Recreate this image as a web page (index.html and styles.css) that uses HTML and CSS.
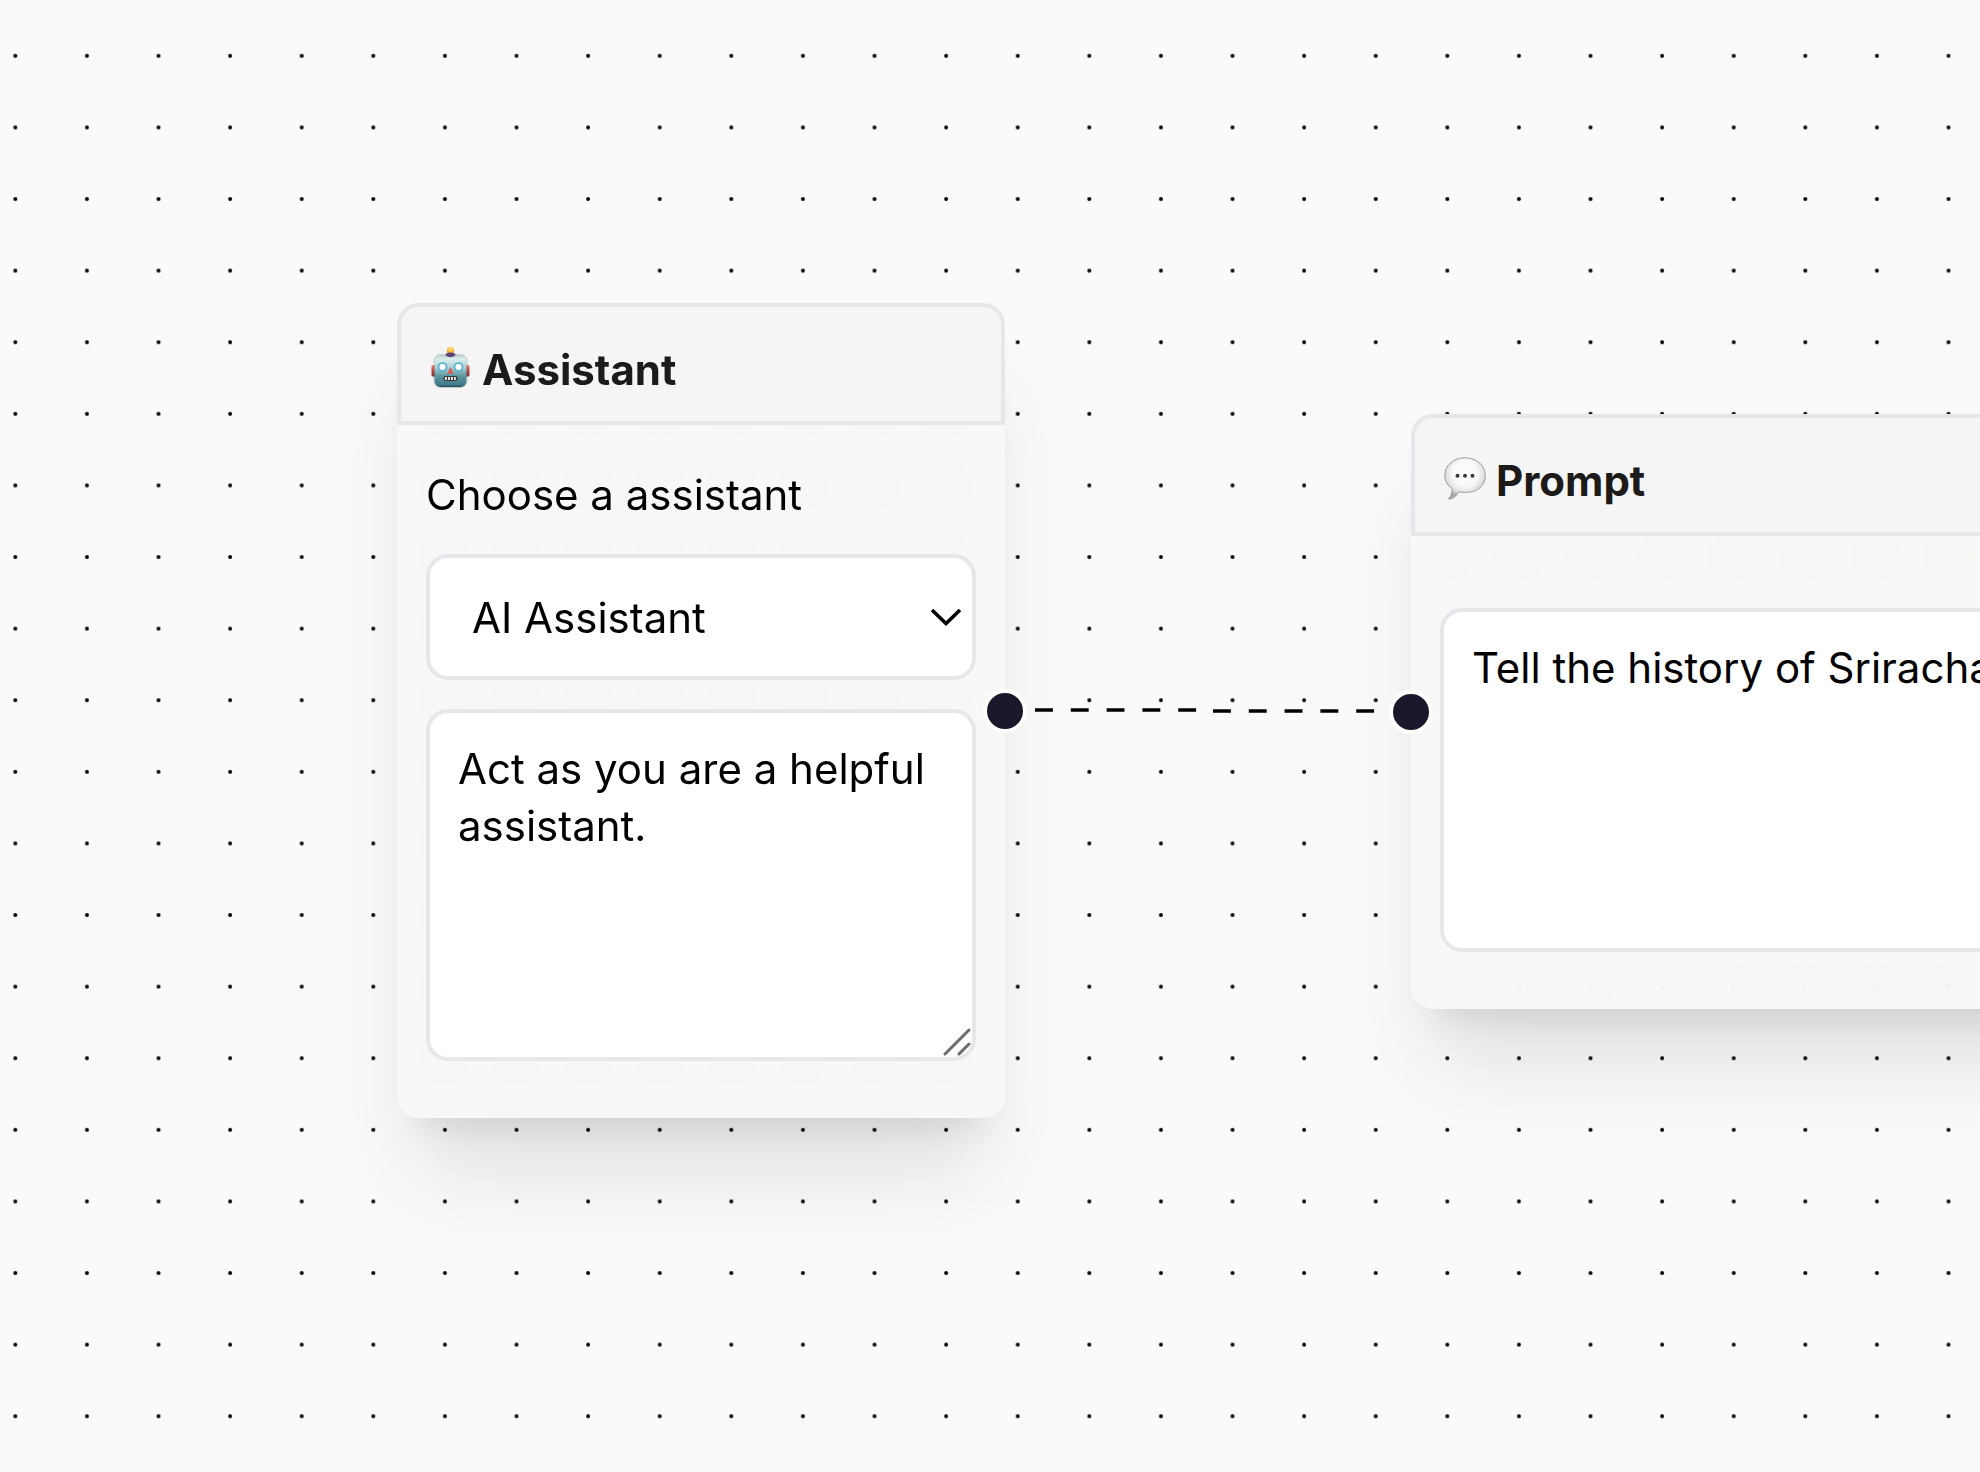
FILE: index.html
```html
<!DOCTYPE html>
<html lang="en">
<head>
  <meta charset="utf-8"/>
  <meta name="viewport" content="width=device-width, initial-scale=1.0"/>
  <title>Prompt Flow</title>
  <link rel="stylesheet" href="styles.css">
</head>
<body>
  <main class="canvas">
    <svg class="canvas-layer" aria-hidden="true">
      <defs>
        <pattern id="dots" x="1.48" y="12.82" width="20" height="20" patternUnits="userSpaceOnUse" patternTransform="scale(3.58)">
          <circle cx="2.8" cy="2.8" r="0.55"/>
        </pattern>
      </defs>
      <rect width="100%" height="100%" fill="url(#dots)"/>
    </svg>

    <section class="node node-assistant">
      <header class="node-header">
        <svg class="node-icon" viewBox="0 0 42 44" aria-hidden="true">
          <defs>
            <linearGradient id="face" x1="0" y1="0" x2="0" y2="1">
              <stop offset="0" stop-color="#b9cbc9"/>
              <stop offset="0.12" stop-color="#d9efed"/>
              <stop offset="0.4" stop-color="#a9cfd3"/>
              <stop offset="0.65" stop-color="#5d96a0"/>
              <stop offset="0.93" stop-color="#3f7b88"/>
              <stop offset="1" stop-color="#244752"/>
            </linearGradient>
            <linearGradient id="ear" x1="0" y1="0" x2="0" y2="1">
              <stop offset="0" stop-color="#f08377"/>
              <stop offset="0.5" stop-color="#bd4540"/>
              <stop offset="1" stop-color="#782e32"/>
            </linearGradient>
            <radialGradient id="bulb" cx="0.5" cy="0.3" r="0.7">
              <stop offset="0" stop-color="#ffe999"/>
              <stop offset="0.5" stop-color="#fbbd35"/>
              <stop offset="1" stop-color="#e98a28"/>
            </radialGradient>
          </defs>
          <rect x="1.5" y="19" width="5" height="11.5" rx="1.5" fill="url(#ear)"/>
          <rect x="34.5" y="19" width="5" height="11.5" rx="1.5" fill="url(#ear)"/>
          <circle cx="20.5" cy="4.5" r="3.6" fill="url(#bulb)"/>
          <rect x="4.5" y="9" width="32" height="32" rx="6" fill="url(#face)"/>
          <rect x="4" y="8.5" width="33" height="33" rx="6.5" fill="none" stroke="#547b80" stroke-opacity="0.35"/>
          <path d="M15.5 9c0-1.800 2-2.600 5-2.600s5 .8 5 2.600c-1 1.500-3 2-5 2s-4-.5-5-2z" fill="#5d4575"/>
          <circle cx="12.5" cy="21" r="4" fill="#fff" stroke="#4bb0d2" stroke-width="1.7"/>
          <circle cx="28.5" cy="21" r="4" fill="#fff" stroke="#4bb0d2" stroke-width="1.7"/>
          <path d="M20.5 21l3.4 6.700h-6.800z" fill="#d75f55"/>
          <rect x="13.5" y="30" width="14" height="5" rx="2" fill="#383b3e"/>
          <path d="M15 32.500h11" stroke="#f4f4ef" stroke-width="3" stroke-dasharray="1.8 1.2"/>
        </svg>
        <h2 class="node-title">Assistant</h2>
      </header>
      <div class="node-body">
        <label class="node-label" for="assistant">Choose a assistant</label>
        <div class="field">
          <select class="select" id="assistant">
            <option>AI Assistant</option>
          </select>
          <svg class="select-arrow" viewBox="0 0 32 20" aria-hidden="true">
            <path d="M2 3l14 13.500L30 3"/>
          </svg>
        </div>
        <div class="field">
          <textarea class="textarea textarea-system" aria-label="System message" spellcheck="false">Act as you are a helpful assistant.</textarea>
          <svg class="resize-grip" viewBox="0 0 28 28" aria-hidden="true">
            <path d="M2 26L26 2M16 26l10-10"/>
          </svg>
        </div>
      </div>
      <span class="handle handle-right"></span>
    </section>

    <section class="node node-prompt">
      <header class="node-header">
        <svg class="node-icon" viewBox="0 0 42 44" aria-hidden="true">
          <defs>
            <radialGradient id="bubble" cx="0.5" cy="0.38" r="0.58">
              <stop offset="0" stop-color="#fff"/>
              <stop offset="0.55" stop-color="#f8f8f8"/>
              <stop offset="0.82" stop-color="#dedede"/>
              <stop offset="1" stop-color="#a8a8a8"/>
            </radialGradient>
          </defs>
          <path d="M21 .8C32.500.8 41.300 8.300 41.300 18.500S33.500 35.500 21.500 35.500c-2.500 0-4.500-.2-6.500-.8-2 3.500-5.500 7-9.500 7.500-1 .1-1-.8-.4-1.300 2-2 3-5 2.900-9.400C3.500 28.500.8 24 .8 18.500.8 8.300 9.500.8 21 .8z" fill="url(#bubble)" stroke="#a0a0a0" stroke-width="1"/>
          <g fill="#3c3c3c">
            <circle cx="13.5" cy="18.8" r="2"/>
            <circle cx="21" cy="18.8" r="2"/>
            <circle cx="28.5" cy="18.8" r="2"/>
          </g>
        </svg>
        <h2 class="node-title">Prompt</h2>
      </header>
      <div class="node-body">
        <div class="field">
          <textarea class="textarea textarea-prompt" aria-label="Prompt" spellcheck="false">Tell the history of Sriracha</textarea>
        </div>
      </div>
      <span class="handle handle-left"></span>
    </section>

    <!-- connection between the two nodes -->
    <svg class="canvas-layer edges" aria-hidden="true">
      <path d="M1035 710H1209V711H1386"/>
    </svg>
  </main>
</body>
</html>
```

FILE: styles.css
```css
* {
  box-sizing: border-box;
}
body {
  margin: 0;
  font-family: Inter, "Liberation Sans", sans-serif;
  font-size: 42px;
  line-height: 57px;
  color: #000;
}
.canvas {
  position: relative;
  height: 100vh;
  overflow: hidden;
  background-color: #fafaf8;
}
.canvas-layer {
  position: absolute;
  inset: 0;
  width: 100%;
  height: 100%;
  pointer-events: none;
}
.edges path {
  fill: none;
  stroke: #000;
  stroke-width: 3.6;
  stroke-dasharray: 17.9 17.9;
}

/* nodes */
.node {
  position: absolute;
  border-radius: 22px;
  background-color: rgba(245, 245, 244, 0.5);
  backdrop-filter: blur(14px);
  box-shadow: 0 72px 90px -18px rgba(0, 0, 0, 0.1), 0 29px 36px -22px rgba(0, 0, 0, 0.1);
}
.node-assistant {
  left: 397px;
  top: 303px;
  width: 608px;
}
.node-prompt {
  left: 1411px;
  top: 414px;
  width: 860px;
}
.node-header {
  display: flex;
  align-items: center;
  gap: 10px;
  padding: 34px 29px 23px;
  border: 4px solid #e5e7eb;
  border-radius: 22px 22px 0 0;
  background-color: #f5f5f5;
}
.node-icon {
  width: 42px;
  height: 44px;
  margin-bottom: 4px;
}
.node-title {
  margin: 0;
  font-size: 42px;
  line-height: 57px;
  font-weight: 700;
  color: #1c1b19;
}
.node-body {
  display: flex;
  flex-direction: column;
  gap: 29px;
  padding: 72px 29px 57px;
}
.node-assistant .node-body {
  padding-top: 41px;
}
.node-label {
  padding-bottom: 2px;
}

/* fields */
.field {
  position: relative;
  display: flex;
}
.select,
.textarea {
  width: 100%;
  border: 4px solid #e5e7eb;
  border-radius: 22px;
  background-color: #fff;
  font: inherit;
  color: inherit;
}
.select {
  appearance: none;
  height: 126px;
  padding: 0 42px;
}
.select-arrow {
  position: absolute;
  right: 14px;
  top: 53px;
  width: 32px;
  height: 20px;
  fill: none;
  stroke: #000;
  stroke-width: 3.6;
  pointer-events: none;
}
.textarea {
  padding: 27px 28px;
  resize: none;
  overflow: hidden;
}
.textarea-system {
  height: 352px;
}
.textarea-prompt {
  height: 344px;
}
.resize-grip {
  position: absolute;
  right: 5px;
  bottom: 5px;
  width: 28px;
  height: 28px;
  stroke: #6b6b6b;
  stroke-width: 3;
  stroke-linecap: round;
  pointer-events: none;
}

/* connection points */
.handle {
  position: absolute;
  top: 50%;
  width: 44px;
  height: 44px;
  border: 4px solid #fff;
  border-radius: 50%;
  background-color: #1a192b;
}
.handle-right {
  right: 0;
  transform: translate(50%, -50%);
}
.handle-left {
  left: 0;
  transform: translate(-50%, -50%);
}
```
